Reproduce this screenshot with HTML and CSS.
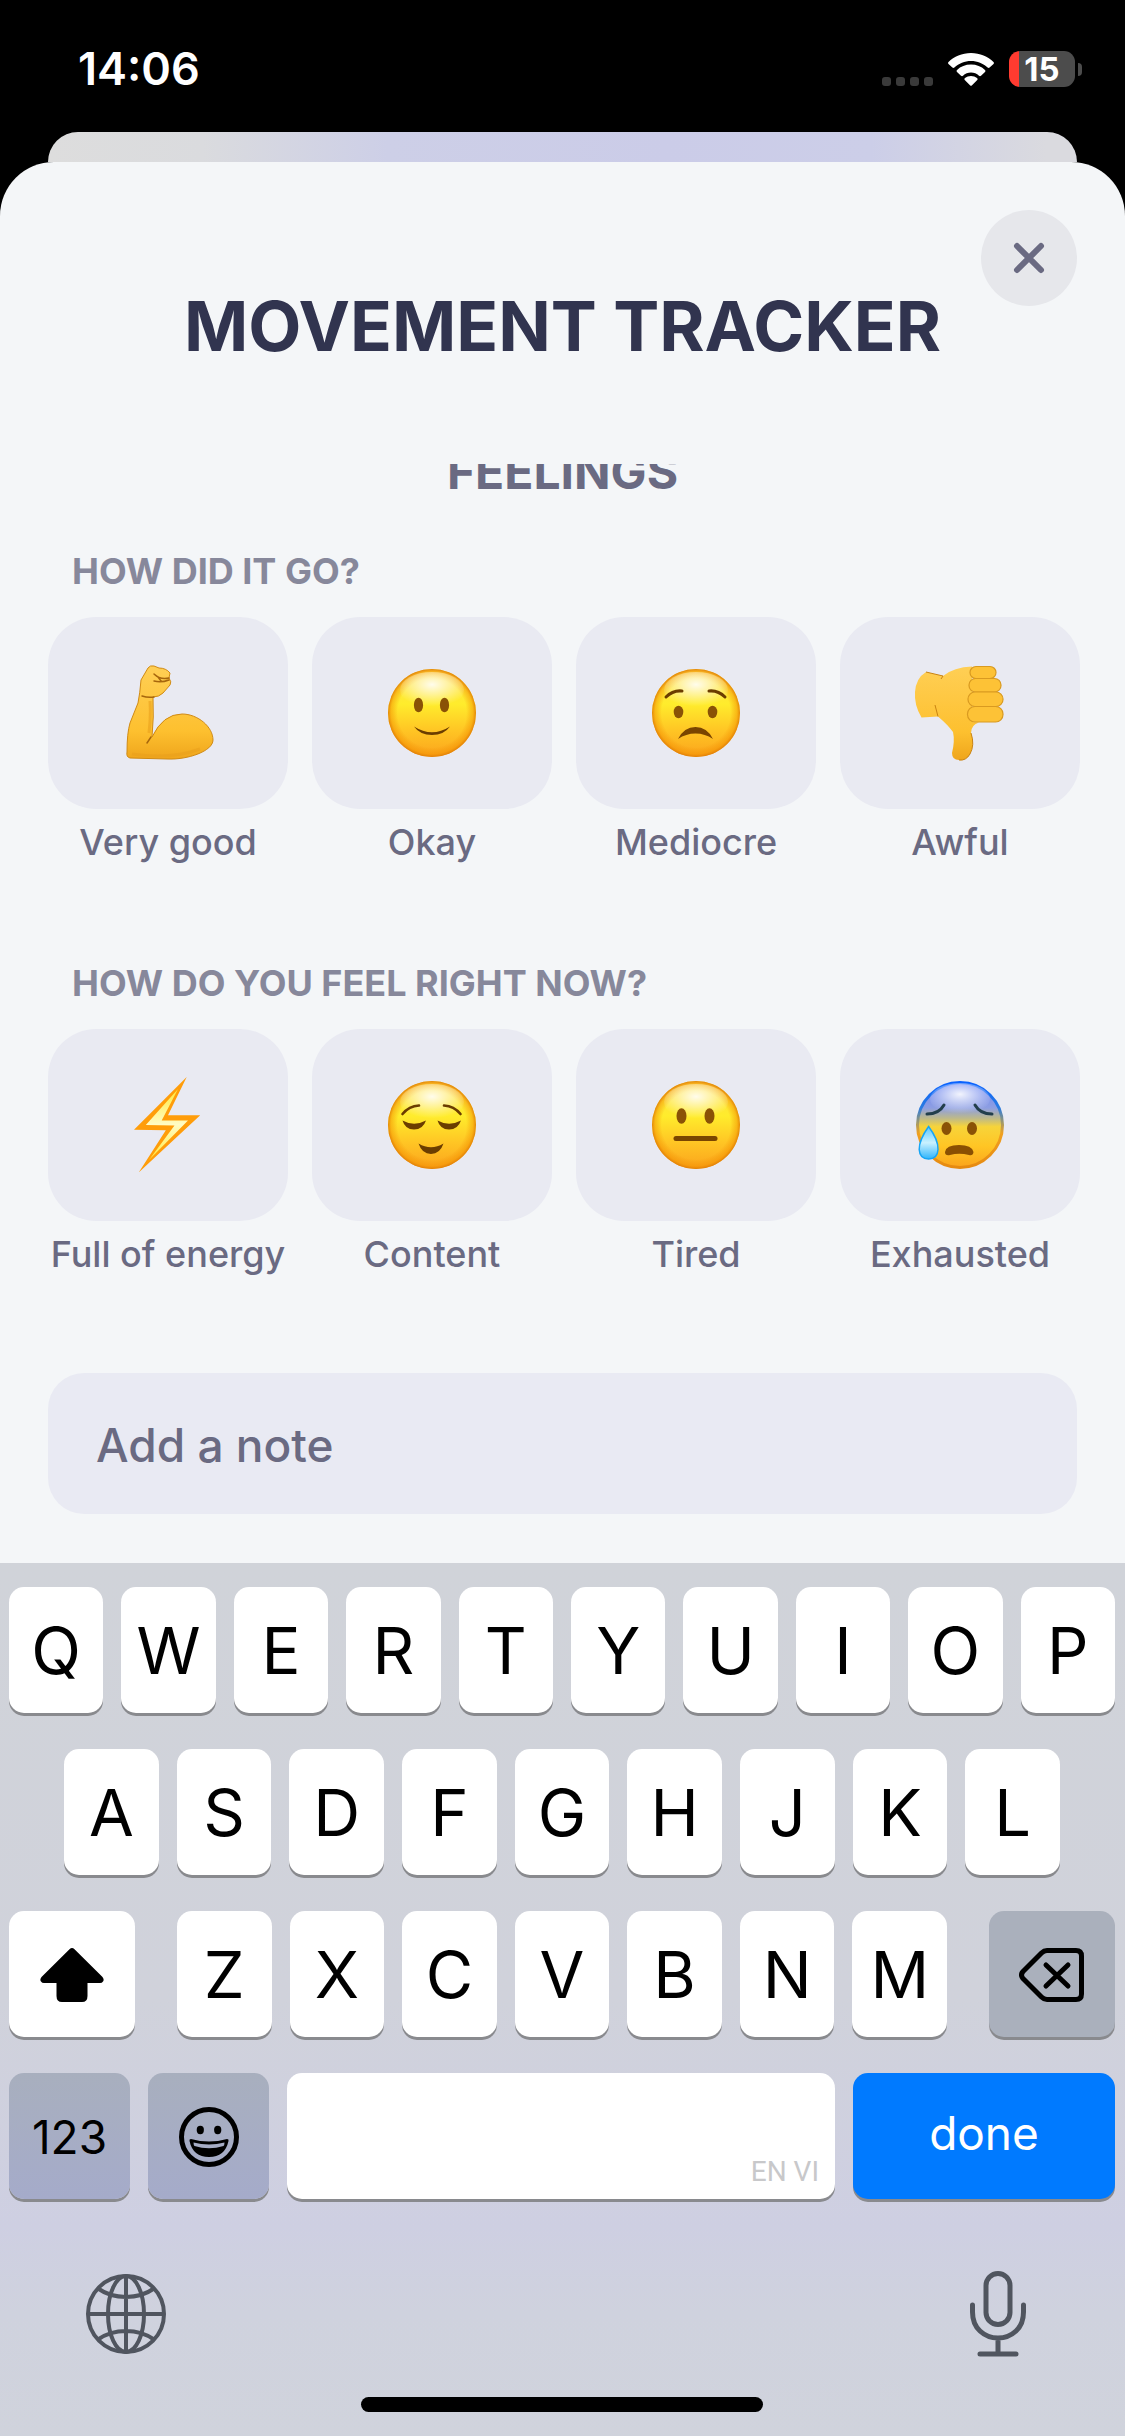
FILE: index.html
```html
<!DOCTYPE html>
<html lang="en">
<head>
    <meta charset="UTF-8" />
    <meta name="viewport" content="width=device-width, initial-scale=1.0"/>
    <title>Movement Tracker</title>
    <link rel="stylesheet" href="styles.css">
</head>
<body>
<!-- shared gradients for the emoji -->
<svg class="defs" width="0" height="0" aria-hidden="true">
    <defs>
        <linearGradient id="faceBase" x1="0" y1="0" x2="0" y2="1">
            <stop offset="0" stop-color="#ffdf4a"/>
            <stop offset="0.4" stop-color="#ffec2c"/>
            <stop offset="0.7" stop-color="#ffc524"/>
            <stop offset="1" stop-color="#fba41c"/>
        </linearGradient>
        <radialGradient id="faceEdge" cx="0.5" cy="0.5" r="0.5">
            <stop offset="0.78" stop-color="#f08a00" stop-opacity="0"/>
            <stop offset="0.93" stop-color="#f39000" stop-opacity="0.5"/>
            <stop offset="1" stop-color="#dd7a06" stop-opacity="0.9"/>
        </radialGradient>
        <radialGradient id="shine" cx="0.5" cy="0.35" r="0.6">
            <stop offset="0" stop-color="#fff" stop-opacity="0.9"/>
            <stop offset="1" stop-color="#fff" stop-opacity="0"/>
        </radialGradient>
        <linearGradient id="coldBase" x1="0" y1="0" x2="0" y2="1">
            <stop offset="0" stop-color="#6d86f5"/>
            <stop offset="0.3" stop-color="#8d9ee2"/>
            <stop offset="0.42" stop-color="#bdb98a"/>
            <stop offset="0.52" stop-color="#f7d43a"/>
            <stop offset="0.75" stop-color="#ffc524"/>
            <stop offset="1" stop-color="#fba41c"/>
        </linearGradient>
        <linearGradient id="coldRing" x1="0" y1="0" x2="0" y2="1">
            <stop offset="0" stop-color="#0a62ff"/>
            <stop offset="0.3" stop-color="#2a7be0"/>
            <stop offset="0.48" stop-color="#a79a63"/>
            <stop offset="0.6" stop-color="#f0a020"/>
            <stop offset="1" stop-color="#e68a10"/>
        </linearGradient>
        <linearGradient id="tear" x1="0" y1="0" x2="0" y2="1">
            <stop offset="0" stop-color="#5cc8ff"/>
            <stop offset="0.5" stop-color="#c9f1ff"/>
            <stop offset="1" stop-color="#2fb4fb"/>
        </linearGradient>
        <linearGradient id="skin" x1="0" y1="0" x2="0" y2="1">
            <stop offset="0" stop-color="#ffcf55"/>
            <stop offset="0.7" stop-color="#fdc02f"/>
            <stop offset="1" stop-color="#efa51c"/>
        </linearGradient>
        <linearGradient id="bolt" x1="0" y1="0" x2="0" y2="1">
            <stop offset="0" stop-color="#ffe93c"/>
            <stop offset="0.5" stop-color="#fffcc4"/>
            <stop offset="1" stop-color="#ffe93c"/>
        </linearGradient>
        <g id="face">
            <circle cx="48" cy="48" r="44" fill="url(#faceBase)"/>
            <circle cx="48" cy="48" r="44" fill="url(#faceEdge)"/>
            <ellipse cx="48" cy="25" rx="32" ry="18" fill="url(#shine)"/>
        </g>
    </defs>
</svg>

<header class="status-bar">
    <time class="clock">14:06</time>
    <div class="status-icons">
        <div class="signal"><i></i><i></i><i></i><i></i></div>
        <svg class="wifi" viewBox="0 0 46 33" aria-hidden="true">
            <path fill="#fff" d="M23 0C32 0 40 3.500 45.500 9a1.500 1.500 0 0 1 0 2L41.600 14.500a1.500 1.500 0 0 1-2 0C35 10.500 29.500 8 23 8S11 10.500 6.400 14.500a1.500 1.500 0 0 1-2 0L.5 11a1.500 1.500 0 0 1 0-2C6 3.500 14 0 23 0Z"/>
            <path fill="#fff" d="M23 11.500c5.500 0 10.300 2 14 5.400a1.500 1.500 0 0 1 0 2.100l-4 3.700a1.500 1.500 0 0 1-2 0C28.800 20.700 26 19.500 23 19.500s-5.800 1.200-8 3.200a1.500 1.500 0 0 1-2 0L9 19a1.500 1.500 0 0 1 0-2.100c3.700-3.400 8.500-5.400 14-5.400Z"/>
            <path fill="#fff" d="M23 23c2.300 0 4.400.8 6 2.100a1.400 1.400 0 0 1 0 2.100l-5 5.100a1.400 1.400 0 0 1-2 0l-5-5.100a1.400 1.400 0 0 1 0-2.100c1.600-1.300 3.700-2.100 6-2.100Z"/>
        </svg>
        <div class="battery">15</div>
    </div>
</header>

<div class="back-sheet"></div>

<main class="sheet">
    <button type="button" class="close" aria-label="Close">
        <svg width="32" height="32" viewBox="0 0 32 32"><path d="M4 4 28 28M28 4 4 28" stroke="#6a6a82" stroke-width="6" stroke-linecap="round"/></svg>
    </button>
    <h1>MOVEMENT TRACKER</h1>

    <div class="content">
        <h2>FEELINGS</h2>

        <section class="question">
            <h3>HOW DID IT GO?</h3>
            <div class="options">
                <button type="button" class="option">
                    <span class="tile">
                        <svg class="emoji" viewBox="0 0 96 96">
                            <path fill="url(#skin)" stroke="#d08a14" stroke-width="1" d="M28 3Q30 0 34 1L39 3Q46 3 50 8L49 13Q52 17 50 20L43 28Q39 32 33 32Q34 52 32 72Q43 49 62 49C78 49 93 62 93 75C93 86 68 95 47 94L10 93Q6 92 7 87Q7 68 10 58L18 38Q20 28 21 15Z"/>
                            <path fill="none" stroke="#a7660c" stroke-width="1.500" stroke-linecap="round" d="M34 9Q40 15 49 13M34 16Q41 18 49 15M38 12L41 16M22 31Q28 33 34 32M31 72L27 78"/>
                            <path fill="none" stroke="#e9a01d" stroke-width="3" opacity="0.6" d="M12 89Q50 95 80 84M30 36Q31 52 29 68"/>
                        </svg>
                    </span>
                    <span class="option-label">Very good</span>
                </button>
                <button type="button" class="option">
                    <span class="tile">
                        <svg class="emoji" viewBox="0 0 96 96">
                            <use href="#face"/>
                            <g fill="#8a5206"><ellipse cx="34.500" cy="40" rx="4.600" ry="7.300"/><ellipse cx="60.500" cy="40" rx="4.600" ry="7.300"/></g>
                            <path fill="#6b3d00" d="M30 61.500Q48 73 66 61.500Q60 70 48 70T30 61.500Z"/>
                        </svg>
                    </span>
                    <span class="option-label">Okay</span>
                </button>
                <button type="button" class="option">
                    <span class="tile">
                        <svg class="emoji" viewBox="0 0 96 96">
                            <use href="#face"/>
                            <g fill="#8a5206"><ellipse cx="30.500" cy="47" rx="4.800" ry="6.200"/><ellipse cx="64.500" cy="47" rx="4.800" ry="6.200"/></g>
                            <path fill="none" stroke="#6b3d00" stroke-width="3" stroke-linecap="round" d="M18 32Q25 25 34 26M61 26Q70 25 77 32"/>
                            <path fill="#7a4500" d="M30 74Q36 62 47.500 62T65 74Q57 68.500 47.500 68.500T30 74Z"/>
                        </svg>
                    </span>
                    <span class="option-label">Mediocre</span>
                </button>
                <button type="button" class="option">
                    <span class="tile">
                        <svg class="emoji" viewBox="0 0 96 96">
                            <path fill="url(#skin)" d="M14 7L31 11Q42 2 60 1.500V57L67 57.500Q59 60 59 68Q63 80 58 89Q54 96 47 95Q40 95 40 88Q43 76 41 67Q36 60 26 51.500L9.500 52.500Q2 40 3 27Q4 13 14 7Z"/>
                            <path fill="none" stroke="#c98312" stroke-width="1" d="M14 7L31 11L29 14M26 51.500L23 40M59 68Q63 80 58 89Q54 96 47 95"/>
                            <g fill="#fdc236" stroke="#d99a20" stroke-width="1.200">
                                <rect x="58" y="1.500" width="26" height="12" rx="6"/>
                                <rect x="57" y="13.500" width="32" height="13.500" rx="6.500"/>
                                <rect x="56" y="27" width="35" height="14.500" rx="7"/>
                                <rect x="55.500" y="41.500" width="35.500" height="15.500" rx="7.500"/>
                            </g>
                        </svg>
                    </span>
                    <span class="option-label">Awful</span>
                </button>
            </div>
        </section>

        <section class="question">
            <h3>HOW DO YOU FEEL RIGHT NOW?</h3>
            <div class="options">
                <button type="button" class="option">
                    <span class="tile">
                        <svg class="emoji" viewBox="0 0 96 96">
                            <path fill="#ff9d0a" d="M66.700 0 48 38.300H80.200L18.700 95.500 45.800 53.300 14 52.700Z"/>
                            <path fill="url(#bolt)" d="M58 12 41.700 43.500H68L29 83 54.500 48.500 25.800 48Z"/>
                        </svg>
                    </span>
                    <span class="option-label">Full of energy</span>
                </button>
                <button type="button" class="option">
                    <span class="tile">
                        <svg class="emoji" viewBox="0 0 96 96">
                            <use href="#face"/>
                            <path fill="none" stroke="#6b3d00" stroke-width="2.600" stroke-linecap="round" d="M18.500 37Q25 29 35 28.500M60 28.500Q70 29 76.500 37"/>
                            <path fill="#6b3d00" d="M18.500 43.500Q30 50 42 43.500Q39 52.500 30 52.500T18.500 43.500ZM53.500 43.500Q65 50 77 43.500Q74 52.500 65 52.500T53.500 43.500ZM34.500 66.500Q47 74 59.500 66.500Q56 77 47 77T34.500 66.500Z"/>
                        </svg>
                    </span>
                    <span class="option-label">Content</span>
                </button>
                <button type="button" class="option">
                    <span class="tile">
                        <svg class="emoji" viewBox="0 0 96 96">
                            <use href="#face"/>
                            <g fill="#8a5206"><ellipse cx="33.500" cy="39" rx="5" ry="7.800"/><ellipse cx="61.500" cy="39" rx="5" ry="7.800"/></g>
                            <path stroke="#7a4500" stroke-width="5" stroke-linecap="round" d="M28 61.500H67"/>
                        </svg>
                    </span>
                    <span class="option-label">Tired</span>
                </button>
                <button type="button" class="option">
                    <span class="tile">
                        <svg class="emoji" viewBox="0 0 96 96">
                            <circle cx="48" cy="48" r="42.500" fill="url(#coldBase)" stroke="url(#coldRing)" stroke-width="3"/>
                            <ellipse cx="48" cy="22" rx="30" ry="16" fill="url(#shine)"/>
                            <path fill="none" stroke="#233f4c" stroke-width="3" stroke-linecap="round" d="M15 37Q27 37 32 28M63 28Q68 37 80 37"/>
                            <g fill="#8a5206"><ellipse cx="34.500" cy="51.500" rx="5" ry="6.400"/><ellipse cx="60" cy="51.500" rx="5" ry="6.400"/></g>
                            <path fill="#8a4f02" d="M33 75Q34 68 47 68T61.500 75Q61 79 57 78Q47 75.500 38 78Q33 79 33 75Z"/>
                            <path fill="url(#tear)" stroke="#16a5f5" stroke-width="1.500" d="M16.600 49.500Q26.500 63 26 72.500Q25.500 82 16.600 82T7.200 72.500Q7 63 16.600 49.500Z"/>
                        </svg>
                    </span>
                    <span class="option-label">Exhausted</span>
                </button>
            </div>
        </section>

        <input type="text" class="note" name="note" placeholder="Add a note" aria-label="Add a note"/>
    </div>
</main>

<div class="keyboard">
    <div class="key-row">
        <button type="button" class="key">Q</button>
        <button type="button" class="key">W</button>
        <button type="button" class="key">E</button>
        <button type="button" class="key">R</button>
        <button type="button" class="key">T</button>
        <button type="button" class="key">Y</button>
        <button type="button" class="key">U</button>
        <button type="button" class="key">I</button>
        <button type="button" class="key">O</button>
        <button type="button" class="key">P</button>
    </div>
    <div class="key-row inset">
        <button type="button" class="key">A</button>
        <button type="button" class="key">S</button>
        <button type="button" class="key">D</button>
        <button type="button" class="key">F</button>
        <button type="button" class="key">G</button>
        <button type="button" class="key">H</button>
        <button type="button" class="key">J</button>
        <button type="button" class="key">K</button>
        <button type="button" class="key">L</button>
    </div>
    <div class="key-row spread">
        <button type="button" class="key wide" aria-label="Shift">
            <svg width="64" height="54" viewBox="0 0 64 54"><path d="M29.500 1.200Q32-1 34.500 1.200L62.500 29Q64.500 31.500 63 33.500Q62 35 60 35H47.500V48Q47.500 54 42 54H22Q16.500 54 16.500 48V35H4Q2 35 1 33.500Q-.5 31.500 1.500 29Z"/></svg>
        </button>
        <div class="key-row letters">
            <button type="button" class="key">Z</button>
            <button type="button" class="key">X</button>
            <button type="button" class="key">C</button>
            <button type="button" class="key">V</button>
            <button type="button" class="key">B</button>
            <button type="button" class="key">N</button>
            <button type="button" class="key">M</button>
        </div>
        <button type="button" class="key wide gray" aria-label="Delete">
            <svg width="66" height="54" viewBox="0 0 66 54" fill="none" stroke="#000" stroke-width="5" stroke-linecap="round" stroke-linejoin="round"><path d="M28 2.500H57Q62.500 2.500 62.500 8V46Q62.500 51.500 57 51.500H28Q25 51.500 22.500 49L4 30.500Q1 27 4 23.500L22.500 5Q25 2.500 28 2.500Z"/><path d="M27 17 49 38M49 17 27 38"/></svg>
        </button>
    </div>
    <div class="key-row">
        <button type="button" class="key mode tinted">123</button>
        <button type="button" class="key mode tinted" aria-label="Emoji">
            <svg width="60" height="60" viewBox="0 0 60 60"><circle cx="30" cy="30" r="27.500" fill="none" stroke="#000" stroke-width="5"/><ellipse cx="21.300" cy="23" rx="3.600" ry="4.200"/><ellipse cx="38.700" cy="23" rx="3.600" ry="4.200"/><path d="M12 32Q30 37 48 32Q50 32 49.500 34Q46 50 30 50T10.500 34Q10 32 12 32Z"/><path fill="#a6adc5" d="M14.500 35.500Q30 39.500 45.500 35.500Q45.500 38 44.500 39Q30 43.500 15.500 39Q14.500 38 14.500 35.500Z"/></svg>
        </button>
        <button type="button" class="key space" aria-label="Space">EN VI</button>
        <button type="button" class="key done">done</button>
    </div>
    <div class="keyboard-footer">
        <button type="button" class="tool" aria-label="Next keyboard">
            <svg width="82" height="82" viewBox="0 0 82 82" fill="none" stroke="#50555f" stroke-width="4"><circle cx="41" cy="41" r="38"/><ellipse cx="41" cy="41" rx="18" ry="38"/><path d="M41 3V79M3 41H79M13 15.500Q25 24 41 24T69 15.500M13 66.500Q25 58 41 58T69 66.500"/></svg>
        </button>
        <button type="button" class="tool" aria-label="Dictate">
            <svg width="58" height="86" viewBox="0 0 58 86" fill="none" stroke="#50555f" stroke-width="5" stroke-linecap="round"><rect x="17" y="2.500" width="24" height="51" rx="12"/><path d="M3.500 34V41Q3.500 53 11 60T29 67T47 60T54.500 41V34M29 67V83M11 83H47"/></svg>
        </button>
    </div>
    <div class="home-indicator"></div>
</div>
</body>
</html>
```
FILE: styles.css
```css
* {
    box-sizing: border-box;
}
body {
    font-family: 'Inter', sans-serif;
    background: #000;
    margin: 0;
    min-height: 100vh;
    display: flex;
    flex-direction: column;
}
button {
    padding: 0;
    border: none;
    background: none;
    font-family: inherit;
    color: inherit;
    cursor: pointer;
}
h1, h2, h3 {
    margin: 0;
}
svg {
    display: block;
}
.defs {
    position: absolute;
}

/* status bar */
.status-bar {
    height: 132px;
    padding: 6px 43px 0 78px;
    display: flex;
    justify-content: space-between;
    align-items: center;
    color: #fff;
}
.clock {
    font-size: 45px;
    line-height: 52px;
    font-weight: 600;
}
.status-icons {
    display: flex;
    align-items: center;
    gap: 15px;
}
.signal {
    display: flex;
    gap: 5px;
    padding-top: 24px;
}
.signal i {
    width: 9px;
    height: 9px;
    border-radius: 3px;
    background: #3a3a3a;
}
.wifi {
    width: 46px;
    height: 33px;
}
.battery {
    position: relative;
    width: 66px;
    height: 36px;
    margin-right: 7px;
    border-radius: 11px;
    background: linear-gradient(90deg, #ff3b30 10px, #4c4c4c 10px);
    font-size: 33px;
    line-height: 36px;
    font-weight: 700;
    text-align: center;
}
.battery::after {
    content: "";
    position: absolute;
    right: -7px;
    top: 12px;
    width: 4px;
    height: 13px;
    border-radius: 0 4px 4px 0;
    background: #4c4c4c;
}

/* sheets */
.back-sheet {
    height: 30px;
    margin: 0 48px;
    border-radius: 30px 30px 0 0;
    background: linear-gradient(90deg, #dddddd 0%, #dadbde 15%, #cdcfe7 33%, #cbcce8 60%, #cccee8 80%, #dadadf 97%);
}
.sheet {
    position: relative;
    flex: 1;
    padding: 122px 0 48px;
    border-radius: 54px 54px 0 0;
    background: #f4f6f8;
    display: flex;
    flex-direction: column;
}
.close {
    position: absolute;
    top: 48px;
    right: 48px;
    width: 96px;
    height: 96px;
    border-radius: 50%;
    background: #e6e7eb;
    display: flex;
    align-items: center;
    justify-content: center;
}
h1 {
    font-size: 69px;
    line-height: 84px;
    font-weight: 700;
    color: #31344f;
    text-align: center;
}
.content {
    margin-top: 96px;
    padding: 0 48px;
    overflow: hidden;
}
/* scrolled part of the way under the title */
h2 {
    margin-top: -20px;
    font-size: 48px;
    line-height: 56px;
    font-weight: 700;
    color: #6a6a82;
    text-align: center;
}
.question {
    margin: 49px -3px 97px 0;
}
.question + .question {
    margin-top: 0;
}
h3 {
    padding-left: 24px;
    margin-bottom: 24px;
    font-size: 36px;
    line-height: 44px;
    font-weight: 700;
    color: #87889b;
}
.options {
    display: grid;
    grid-template-columns: repeat(4, 1fr);
    gap: 24px;
}
.option {
    display: flex;
    flex-direction: column;
    gap: 11px;
    min-width: 0;
}
.tile {
    width: 100%;
    height: 192px;
    border-radius: 48px;
    background: #e9eaf2;
    display: flex;
    align-items: center;
    justify-content: center;
}
.emoji {
    width: 96px;
    height: 96px;
}
.option-label {
    align-self: center;
    font-size: 36px;
    line-height: 44px;
    font-weight: 500;
    color: #6a6a82;
    white-space: nowrap;
}
.note {
    display: block;
    width: 100%;
    height: 141px;
    padding: 2px 48px 0;
    border: none;
    border-radius: 36px;
    background: #e9eaf3;
    font-family: inherit;
    font-size: 46px;
    font-weight: 500;
    color: #31344f;
}
.note::placeholder {
    color: #6a6a82;
    opacity: 1;
}

/* keyboard */
.keyboard {
    padding: 24px 10px 24px 9px;
    background: linear-gradient(180deg, #d0d3d9 0%, #d0d2db 50%, #cecfe2 76%, #cfd2de 86%, #d0d3dc 100%);
    display: flex;
    flex-direction: column;
    gap: 36px;
    color: #000;
}
.key-row {
    display: flex;
    gap: 18px;
}
.inset {
    padding: 0 55px;
}
.spread {
    gap: 42px;
}
.letters {
    flex: 1;
}
.key {
    flex: 1;
    min-width: 0;
    height: 126px;
    padding-top: 2px;
    border-radius: 15px;
    background: #fff;
    box-shadow: 0 3px 0 #898a8e;
    font-size: 65px;
    line-height: 78px;
    display: flex;
    align-items: center;
    justify-content: center;
}
.wide {
    flex: 0 0 126px;
}
.gray {
    background: #aab0bc;
}
.mode {
    flex: 0 0 121px;
    font-size: 46px;
}
.tinted {
    background: linear-gradient(180deg, #a8afbe, #a5abca);
}
.space {
    justify-content: flex-end;
    align-items: flex-end;
    padding: 0 16px 9px 0;
    font-family: 'Liberation Sans Narrow', 'Roboto', sans-serif;
    font-size: 28px;
    line-height: 36px;
    color: #c8c8ca;
}
.done {
    flex: 0 0 262px;
    padding: 0 0 6px;
    background: #007aff;
    color: #fff;
    font-size: 46px;
}
.keyboard-footer {
    margin-top: 36px;
    padding: 0 74px;
    display: flex;
    justify-content: space-between;
}
.tool {
    width: 86px;
    height: 86px;
    display: flex;
    align-items: center;
    justify-content: center;
}
.home-indicator {
    align-self: center;
    width: 402px;
    height: 15px;
    margin-top: 4px;
    border-radius: 8px;
    background: #000;
}
```
